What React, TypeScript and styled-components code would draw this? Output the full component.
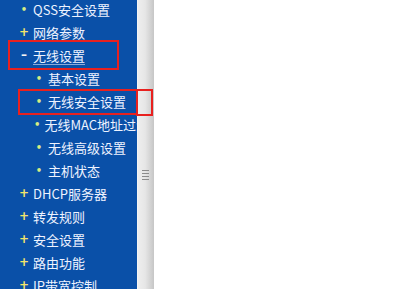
import React from 'react';
import styled, { createGlobalStyle } from 'styled-components';

const GlobalStyle = createGlobalStyle`
  html, body {
    margin: 0;
    padding: 0;
    background: #ffffff;
  }
`;

const Frame = styled.div`
  position: relative;
  display: flex;
  width: 398px;
  height: 289px;
  overflow: hidden;
  background: #ffffff;
  font-family: 'SimSun', 'Noto Sans CJK SC', 'DejaVu Sans', sans-serif;
`;

const Sidebar = styled.div`
  width: 137px;
  height: 100%;
  background: #0a50a8;
  overflow: hidden;
  flex-shrink: 0;
`;

const Menu = styled.ul`
  list-style: none;
  margin: -2px 0 0;
  padding: 0;
`;

const Item = styled.li<{ $level: number }>`
  display: flex;
  align-items: center;
  height: 23px;
  padding-left: ${(p) => (p.$level === 0 ? 19 : 34)}px;
  white-space: nowrap;
  color: #eef3ff;
  font-size: 13px;
  line-height: 23px;
`;

const Marker = styled.span<{ $kind: 'dot' | 'plus' | 'minus' }>`
  display: inline-flex;
  justify-content: center;
  align-items: center;
  width: 10px;
  margin-right: 4px;
  font-family: 'DejaVu Sans', sans-serif;
  font-weight: bold;
  font-size: ${(p) => (p.$kind === 'dot' ? 10 : 12)}px;
  color: ${(p) =>
    p.$kind === 'dot' ? '#d6ec84' : p.$kind === 'plus' ? '#f2e46a' : '#f4f4f4'};
`;

const Label = styled.span<{ $active?: boolean }>`
  text-decoration: ${(p) => (p.$active ? 'underline' : 'none')};
  text-decoration-color: rgba(220, 230, 255, 0.6);
  text-underline-offset: 3px;
`;

const Scrollbar = styled.div`
  position: relative;
  width: 16px;
  height: 100%;
  border-left: 1px solid #f4f4f4;
  background: linear-gradient(to right, #eeeeee 0%, #e6e6e6 45%, #c6c6c6 100%);
  flex-shrink: 0;
`;

const Grip = styled.div`
  position: absolute;
  left: 4px;
  top: 170px;
  width: 7px;
  height: 10px;
  background: repeating-linear-gradient(
    to bottom,
    #8c8c8c 0px,
    #8c8c8c 1px,
    transparent 1px,
    transparent 3px
  );
`;

const Content = styled.div`
  flex: 1;
  background: #ffffff;
`;

const Highlight = styled.div<{ $x: number; $y: number; $w: number; $h: number }>`
  position: absolute;
  left: ${(p) => p.$x}px;
  top: ${(p) => p.$y}px;
  width: ${(p) => p.$w}px;
  height: ${(p) => p.$h}px;
  border: 2px solid #e8211f;
  box-sizing: border-box;
  pointer-events: none;
`;

type Entry = { label: string; level: number; kind: 'dot' | 'plus' | 'minus'; active?: boolean };

const entries: Entry[] = [
  { label: 'QSS安全设置', level: 0, kind: 'dot' },
  { label: '网络参数', level: 0, kind: 'plus' },
  { label: '无线设置', level: 0, kind: 'minus', active: true },
  { label: '基本设置', level: 1, kind: 'dot' },
  { label: '无线安全设置', level: 1, kind: 'dot' },
  { label: '无线MAC地址过滤', level: 1, kind: 'dot' },
  { label: '无线高级设置', level: 1, kind: 'dot' },
  { label: '主机状态', level: 1, kind: 'dot' },
  { label: 'DHCP服务器', level: 0, kind: 'plus' },
  { label: '转发规则', level: 0, kind: 'plus' },
  { label: '安全设置', level: 0, kind: 'plus' },
  { label: '路由功能', level: 0, kind: 'plus' },
  { label: 'IP带宽控制', level: 0, kind: 'plus' },
];

const App: React.FC = () => {
  return (
    <>
      <GlobalStyle />
      <Frame>
        <Sidebar>
          <Menu>
            {entries.map((e) => (
              <Item key={e.label} $level={e.level}>
                <Marker $kind={e.kind}>
                  {e.kind === 'dot' ? '•' : e.kind === 'plus' ? '+' : '–'}
                </Marker>
                <Label $active={e.active}>{e.label}</Label>
              </Item>
            ))}
          </Menu>
        </Sidebar>
        <Scrollbar>
          <Grip />
        </Scrollbar>
        <Content />
        <Highlight $x={8} $y={40} $w={111} $h={30} />
        <Highlight $x={18} $y={89} $w={120} $h={26} />
        <Highlight $x={136} $y={89} $w={17} $h={27} />
      </Frame>
    </>
  );
};

export default App;
